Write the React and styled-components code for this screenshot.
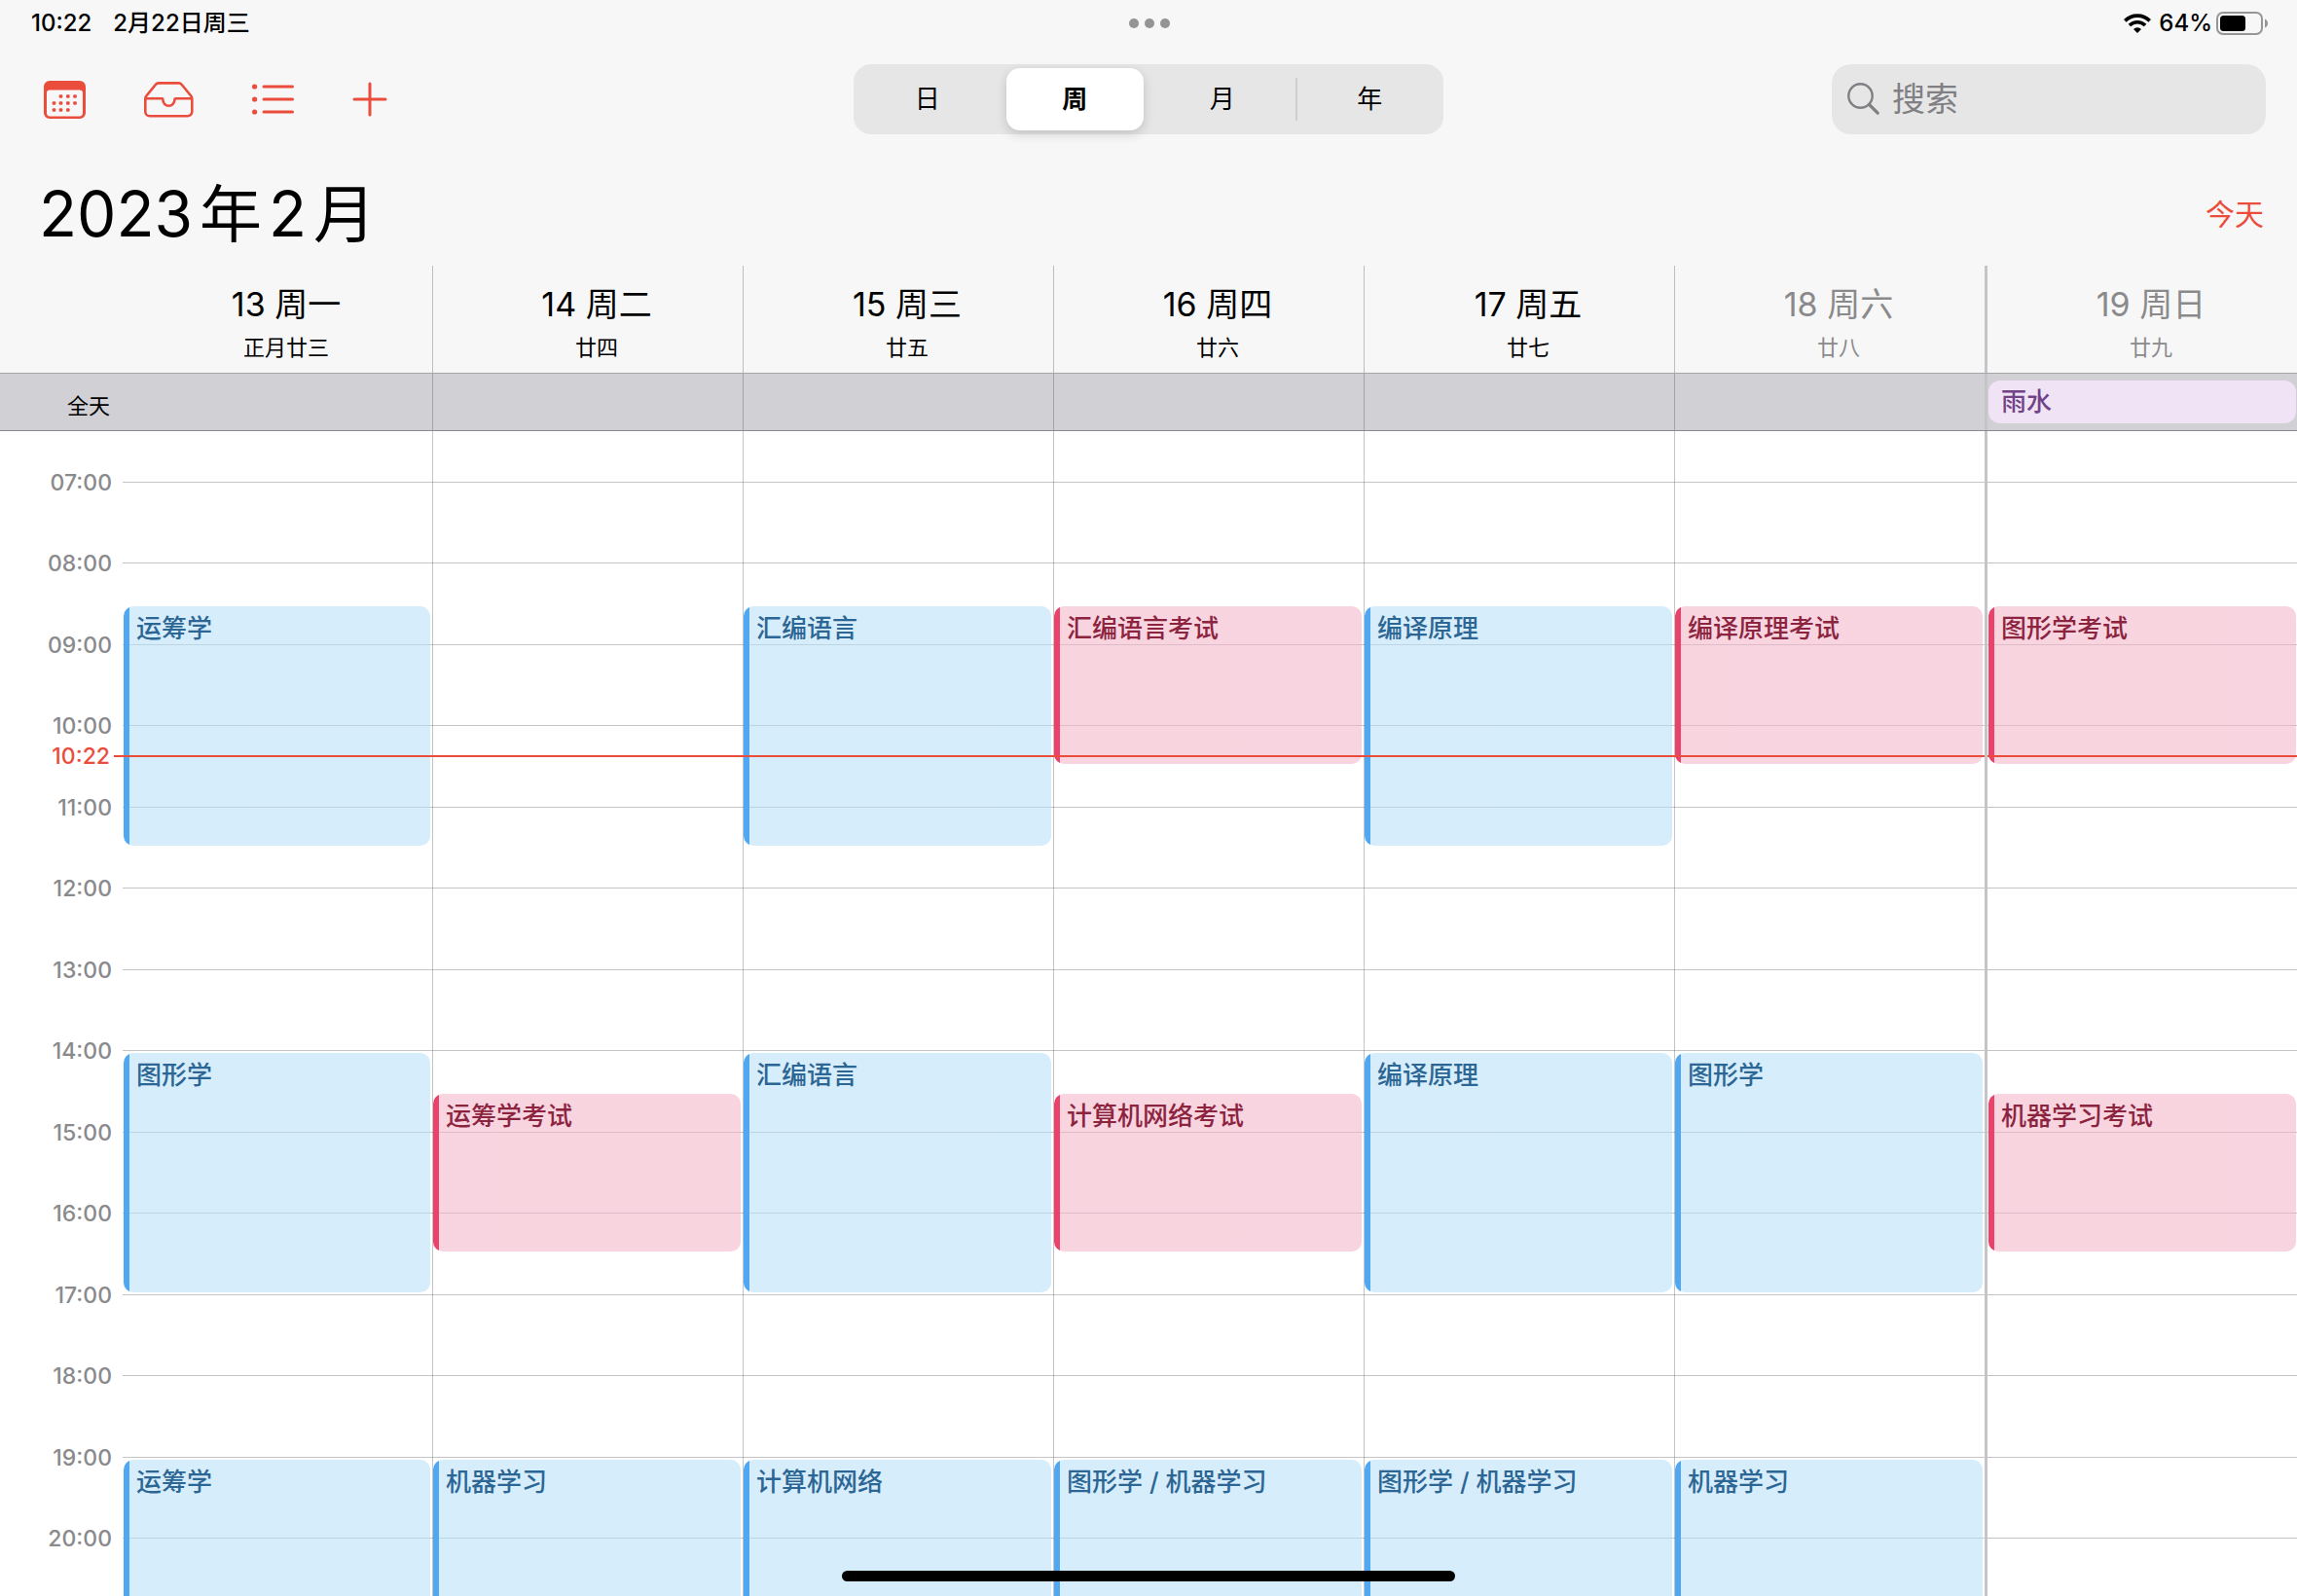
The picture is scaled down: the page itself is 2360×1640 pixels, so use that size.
import React, { useState } from "react";
import styled, { createGlobalStyle, css } from "styled-components";

const RED = "#eb4d3d";
const SEPARATOR = "rgba(60, 60, 67, 0.3)";
const WEEKEND_EDGE = "#c5c5c7";
const GUTTER = "126px";

const palettes = {
  blue: { bar: "#50a8f2", fill: "rgba(183, 223, 248, 0.57)", text: "#2c6694" },
  pink: { bar: "#eb426c", fill: "rgba(243, 180, 200, 0.57)", text: "#8c2440" },
};

const days = [
  {
    date: "13 周一",
    lunar: "正月廿三",
    events: [
      { title: "运筹学", from: 8.5, to: 11.5, tone: "blue" },
      { title: "图形学", from: 14, to: 17, tone: "blue" },
      { title: "运筹学", from: 19, to: 22, tone: "blue" },
    ],
  },
  {
    date: "14 周二",
    lunar: "廿四",
    events: [
      { title: "运筹学考试", from: 14.5, to: 16.5, tone: "pink" },
      { title: "机器学习", from: 19, to: 22, tone: "blue" },
    ],
  },
  {
    date: "15 周三",
    lunar: "廿五",
    events: [
      { title: "汇编语言", from: 8.5, to: 11.5, tone: "blue" },
      { title: "汇编语言", from: 14, to: 17, tone: "blue" },
      { title: "计算机网络", from: 19, to: 22, tone: "blue" },
    ],
  },
  {
    date: "16 周四",
    lunar: "廿六",
    events: [
      { title: "汇编语言考试", from: 8.5, to: 10.5, tone: "pink" },
      { title: "计算机网络考试", from: 14.5, to: 16.5, tone: "pink" },
      { title: "图形学 / 机器学习", from: 19, to: 22, tone: "blue" },
    ],
  },
  {
    date: "17 周五",
    lunar: "廿七",
    events: [
      { title: "编译原理", from: 8.5, to: 11.5, tone: "blue" },
      { title: "编译原理", from: 14, to: 17, tone: "blue" },
      { title: "图形学 / 机器学习", from: 19, to: 22, tone: "blue" },
    ],
  },
  {
    date: "18 周六",
    lunar: "廿八",
    weekend: true,
    events: [
      { title: "编译原理考试", from: 8.5, to: 10.5, tone: "pink" },
      { title: "图形学", from: 14, to: 17, tone: "blue" },
      { title: "机器学习", from: 19, to: 22, tone: "blue" },
    ],
  },
  {
    date: "19 周日",
    lunar: "廿九",
    weekend: true,
    allDay: "雨水",
    events: [
      { title: "图形学考试", from: 8.5, to: 10.5, tone: "pink" },
      { title: "机器学习考试", from: 14.5, to: 16.5, tone: "pink" },
    ],
  },
];

const FIRST_HOUR = 7;
const hours = Array.from({ length: 14 }, (_, i) => FIRST_HOUR + i);

// Row 1 is the strip above 07:00; every half hour after it takes one row.
const rowOf = (time) => (time - FIRST_HOUR) * 2 + 2;
const offsetOf = (h, m) => Math.floor(52 + ((h - FIRST_HOUR + m / 60) * 167) / 2);

const GlobalStyle = createGlobalStyle`
  *, *::before, *::after { box-sizing: border-box; }
  body {
    margin: 0;
    background: #fff;
    color: #000;
    font-family: Inter, "Noto Sans CJK SC", sans-serif;
    -webkit-font-smoothing: antialiased;
  }
  button, input { font: inherit; color: inherit; }
  button { border: 0; padding: 0; background: none; cursor: pointer; }
  h1, h2, h3, p { margin: 0; font-weight: 400; }
`;

const Page = styled.div`
  position: relative;
  display: flex;
  flex-direction: column;
  height: 100vh;
  overflow: hidden;
`;

const Top = styled.header`
  background: #f7f7f7;
`;

const StatusBar = styled.div`
  display: grid;
  grid-template-columns: 1fr auto 1fr;
  align-items: center;
  height: 48px;
  padding: 0 30px 0 32px;
  font-size: 24px;
  font-weight: 500;
  line-height: 32px;
`;

const StatusLeft = styled.div`
  display: flex;
  gap: 22px;
`;

const Dots = styled.div`
  display: flex;
  gap: 6px;
`;

const Dot = styled.span`
  width: 10px;
  height: 10px;
  border-radius: 50%;
  background: #949494;
`;

const StatusRight = styled.div`
  display: flex;
  align-items: center;
  justify-content: flex-end;
  gap: 4px;
  svg { display: block; }
`;

const Percent = styled.span`
  padding-left: 4px;
`;

const Toolbar = styled.div`
  display: grid;
  grid-template-columns: 1fr 606px 1fr;
  align-items: center;
  padding: 18px 32px 0;
`;

const Tools = styled.nav`
  display: flex;
  align-items: center;
  gap: 60px;
  padding-left: 13px;
`;

const ToolButton = styled.button`
  display: grid;
  place-items: center;
  color: ${RED};
  svg { display: block; }
`;

const Segmented = styled.div`
  display: grid;
  grid-template-columns: repeat(4, 1fr);
  height: 72px;
  border-radius: 18px;
  background: #e6e6e6;
`;

const Segment = styled.button`
  position: relative;
  margin: 4px 5px;
  border-radius: 14px;
  font-size: 26px;
  line-height: 32px;
  ${(p) =>
    p.$active &&
    css`
      background: #fff;
      font-weight: 600;
      box-shadow: 0 4px 12px rgba(0, 0, 0, 0.16);
    `}
  ${(p) =>
    p.$divided &&
    css`
      &::before {
        content: "";
        position: absolute;
        left: -6px;
        top: 10px;
        bottom: 10px;
        width: 2px;
        background: #cfcfd1;
      }
    `}
`;

const SearchField = styled.label`
  justify-self: end;
  display: flex;
  align-items: center;
  gap: 12px;
  width: 446px;
  height: 72px;
  padding: 0 16px;
  border-radius: 20px;
  background: #e6e6e6;
  color: #808084;
  svg { flex: none; }
`;

const SearchInput = styled.input`
  flex: 1;
  min-width: 0;
  height: 48px;
  padding: 0;
  border: 0;
  outline: 0;
  background: transparent;
  font-size: 34px;
  line-height: 48px;
  &::placeholder { color: #808084; opacity: 1; }
`;

const TitleRow = styled.div`
  display: flex;
  align-items: center;
  justify-content: space-between;
  height: 135px;
  padding: 28px 34px 0 40px;
`;

const Title = styled.h1`
  display: flex;
  gap: 7px;
  font-size: 64px;
  line-height: 80px;
`;

const TodayButton = styled.button`
  color: ${RED};
  font-size: 30px;
  line-height: 40px;
`;

const WeekRow = styled.div`
  display: flex;
  padding-left: ${GUTTER};
`;

const column = css`
  position: relative;
  flex: 1 1 0;
  min-width: 0;
  border-right: 1px solid ${SEPARATOR};
  &:nth-last-child(2) { border-right: 3px solid transparent; }
  &:nth-last-child(2)::after {
    content: "";
    position: absolute;
    z-index: 2;
    top: 0;
    bottom: 0;
    right: -3px;
    width: 3px;
    background: ${WEEKEND_EDGE};
  }
  &:last-child { border-right: 0; }
`;

const DayHead = styled.div`
  ${column}
  display: flex;
  flex-direction: column;
  align-items: center;
  gap: 8px;
  padding: 18px 0 12px 18px;
  color: ${(p) => (p.$weekend ? "#8a8a8c" : "#000")};
`;

const DayDate = styled.h2`
  font-size: 34px;
  line-height: 44px;
`;

const DayLunar = styled.p`
  font-size: 22px;
  line-height: 28px;
`;

const AllDayBar = styled.section`
  display: flex;
  height: 60px;
  border-top: 1px solid #a5a5aa;
  border-bottom: 1px solid #8a8a8f;
  background: #d1d0d5;
`;

const AllDayLabel = styled.div`
  flex: none;
  width: ${GUTTER};
  padding: 19px 13px 0 0;
  text-align: right;
  font-size: 22px;
  line-height: 28px;
`;

const AllDayCell = styled.div`
  ${column}
`;

const AllDayEvent = styled.article`
  height: 44px;
  margin: 7px 1px;
  padding-left: 13px;
  border-radius: 12px;
  background: #f0e3f5;
  color: #704487;
  font-size: 26px;
  font-weight: 500;
  line-height: 44px;
`;

const Schedule = styled.main`
  position: relative;
  flex: 1;
  display: flex;
  align-items: flex-start;
  min-height: 0;
  overflow: hidden;
`;

const timeRows = css`
  display: grid;
  grid-template-rows: 52px repeat(8, 42px 41px 42px 42px);
`;

const Hours = styled.div`
  ${timeRows}
  flex: none;
  width: ${GUTTER};
`;

const HourLabel = styled.time`
  margin: -11px 11px 0 0;
  color: #8a8a8d;
  font-size: 23px;
  font-weight: 500;
  line-height: 24px;
  text-align: right;
`;

const DayGrid = styled.div`
  flex: 1;
  display: flex;
  background-image: linear-gradient(
    ${SEPARATOR} 1px,
    transparent 1px,
    transparent 83px,
    ${SEPARATOR} 83px,
    ${SEPARATOR} 84px,
    transparent 84px
  );
  background-size: 100% 167px;
  background-position: 0 52px;
`;

const Event = styled.article`
  margin: 3px 2px 2px 0;
  padding: 6px 8px 0 13px;
  overflow: hidden;
  border-radius: 10px;
  background: linear-gradient(
    90deg,
    ${(p) => palettes[p.$tone].bar} 6px,
    ${(p) => palettes[p.$tone].fill} 6px
  );
  color: ${(p) => palettes[p.$tone].text};
`;

const DayColumn = styled.div`
  ${column}
  ${timeRows}
  &:first-child ${Event} { margin-left: 1px; }
  &:last-child ${Event} { margin-left: 1px; margin-right: 1px; }
`;

const EventTitle = styled.h3`
  font-size: 26px;
  font-weight: 500;
  line-height: 34px;
`;

const Now = styled.div`
  position: absolute;
  z-index: 1;
  left: 0;
  right: 0;
  display: flex;
  align-items: center;
  height: 2px;
  color: ${RED};
  pointer-events: none;
  &::after {
    content: "";
    flex: 1;
    height: 2px;
    background: ${RED};
  }
`;

const NowLabel = styled.time`
  width: 117px;
  padding-right: 4px;
  font-size: 23px;
  font-weight: 500;
  line-height: 24px;
  text-align: right;
`;

const HomeIndicator = styled.div`
  position: absolute;
  z-index: 3;
  bottom: 15px;
  left: 50%;
  width: 630px;
  height: 11px;
  margin-left: -315px;
  border-radius: 6px;
  background: #000;
`;

function CalendarIcon() {
  const dots = [
    [17.5, 16], [24.8, 16], [32, 16],
    [10.5, 23], [17.5, 23], [24.8, 23], [32, 23],
    [10.5, 30], [17.5, 30], [24.8, 30],
  ];
  return (
    <svg width="43" height="39" viewBox="0 0 43 39" fill="currentColor" aria-hidden="true">
      <path
        fillRule="evenodd"
        d="M6 0h31a6 6 0 0 1 6 6v27a6 6 0 0 1-6 6H6a6 6 0 0 1-6-6V6a6 6 0 0 1 6-6zM6.200 9.500Q3 9.500 3 12.700V33q0 3.400 3.400 3.400h30.200Q40 36.400 40 33V12.700Q40 9.500 36.800 9.500z"
      />
      {dots.map(([x, y]) => (
        <rect key={`${x}-${y}`} x={x - 1.8} y={y - 1.8} width="3.600" height="3.600" rx="1.100" />
      ))}
    </svg>
  );
}

function InboxIcon() {
  return (
    <svg width="51" height="37" viewBox="0 0 51 37" fill="none" stroke="currentColor" strokeWidth="2.600" strokeLinejoin="round" aria-hidden="true">
      <path d="M1.300 17.500v13.200a4.500 4.500 0 0 0 4.500 4.500h39a4.500 4.500 0 0 0 4.500-4.500V17.500q0-1.700-1.100-3L39 3.200q-1.500-1.800-3.500-1.800H15.200q-2 0-3.500 1.800L2.400 14.500q-1.100 1.300-1.100 3z" />
      <path d="M1.300 17.300h17.200a.8.8 0 0 1 .8.800 6 6.600 0 0 0 12.200 0 .8.800 0 0 1 .8-.8h17" />
    </svg>
  );
}

function ListIcon() {
  return (
    <svg width="43" height="32" viewBox="0 0 43 32" aria-hidden="true">
      {[3, 16, 29].map((y) => (
        <g key={y} fill="currentColor">
          <circle cx="2.600" cy={y} r="2.600" />
          <rect x="10.500" y={y - 1.5} width="32.500" height="3" rx="1.500" />
        </g>
      ))}
    </svg>
  );
}

function PlusIcon() {
  return (
    <svg width="36" height="36" viewBox="0 0 36 36" stroke="currentColor" strokeWidth="3" strokeLinecap="round" aria-hidden="true">
      <path d="M18 2v32M2 18h32" />
    </svg>
  );
}

function SearchIcon() {
  return (
    <svg width="34" height="34" viewBox="0 0 34 34" fill="none" stroke="currentColor" strokeLinecap="round" aria-hidden="true">
      <circle cx="13.500" cy="13.500" r="12.200" strokeWidth="2.400" />
      <path d="M22.500 22.500l8.700 8.700" strokeWidth="3.200" />
    </svg>
  );
}

function WifiIcon() {
  return (
    <svg width="28" height="20" viewBox="0 0 28 20" fill="none" stroke="currentColor" strokeWidth="3.600" aria-hidden="true">
      <path d="M1.300 7.400a18 18 0 0 1 25.400 0" />
      <path d="M5.900 12a11.600 11.600 0 0 1 16.200 0" />
      <path d="M14 20l-4-4.100a5.700 5.700 0 0 1 8 0z" fill="currentColor" stroke="none" />
    </svg>
  );
}

function BatteryIcon() {
  return (
    <svg width="53" height="24" viewBox="0 0 53 24" aria-hidden="true">
      <rect x="1" y="1" width="46" height="22" rx="6" fill="none" stroke="#969696" strokeWidth="2" />
      <rect x="4" y="4" width="26" height="16" rx="3.500" fill="#000" />
      <path d="M50 7.500q3 1.500 3 4.500t-3 4.500z" fill="#969696" />
    </svg>
  );
}

const views = ["日", "周", "月", "年"];

export default function App() {
  const [view, setView] = useState("周");
  const [query, setQuery] = useState("");

  return (
    <>
      <GlobalStyle />
      <Page>
        <Top>
          <StatusBar>
            <StatusLeft>
              <span>10:22</span>
              <span>2月22日周三</span>
            </StatusLeft>
            <Dots>
              <Dot />
              <Dot />
              <Dot />
            </Dots>
            <StatusRight>
              <WifiIcon />
              <Percent>64%</Percent>
              <BatteryIcon />
            </StatusRight>
          </StatusBar>

          <Toolbar>
            <Tools>
              <ToolButton aria-label="日历"><CalendarIcon /></ToolButton>
              <ToolButton aria-label="收件箱"><InboxIcon /></ToolButton>
              <ToolButton aria-label="列表"><ListIcon /></ToolButton>
              <ToolButton aria-label="新建"><PlusIcon /></ToolButton>
            </Tools>
            <Segmented role="group" aria-label="视图">
              {views.map((name, i) => (
                <Segment
                  key={name}
                  $active={view === name}
                  $divided={i > 0 && view !== name && view !== views[i - 1]}
                  aria-pressed={view === name}
                  onClick={() => setView(name)}
                >
                  {name}
                </Segment>
              ))}
            </Segmented>
            <SearchField>
              <SearchIcon />
              <SearchInput
                type="text"
                aria-label="搜索"
                placeholder="搜索"
                value={query}
                onChange={(e) => setQuery(e.target.value)}
              />
            </SearchField>
          </Toolbar>

          <TitleRow>
            <Title>
              <span>2023</span>
              <span>年</span>
              <span>2</span>
              <span>月</span>
            </Title>
            <TodayButton>今天</TodayButton>
          </TitleRow>

          <WeekRow>
            {days.map((day) => (
              <DayHead key={day.date} $weekend={day.weekend}>
                <DayDate>{day.date}</DayDate>
                <DayLunar>{day.lunar}</DayLunar>
              </DayHead>
            ))}
          </WeekRow>
        </Top>

        <AllDayBar>
          <AllDayLabel>全天</AllDayLabel>
          {days.map((day) => (
            <AllDayCell key={day.date}>
              {day.allDay && <AllDayEvent>{day.allDay}</AllDayEvent>}
            </AllDayCell>
          ))}
        </AllDayBar>

        <Schedule>
          <Hours>
            {hours.map((hour) => (
              <HourLabel key={hour} style={{ gridRow: rowOf(hour) }}>
                {String(hour).padStart(2, "0")}:00
              </HourLabel>
            ))}
          </Hours>
          <DayGrid>
            {days.map((day) => (
              <DayColumn key={day.date}>
                {day.events.map((event) => (
                  <Event
                    key={event.from}
                    $tone={event.tone}
                    style={{ gridRow: `${rowOf(event.from)} / ${rowOf(event.to)}` }}
                  >
                    <EventTitle>{event.title}</EventTitle>
                  </Event>
                ))}
              </DayColumn>
            ))}
          </DayGrid>
          <Now style={{ top: offsetOf(10, 22) }}>
            <NowLabel>10:22</NowLabel>
          </Now>
        </Schedule>

        <HomeIndicator />
      </Page>
    </>
  );
}
